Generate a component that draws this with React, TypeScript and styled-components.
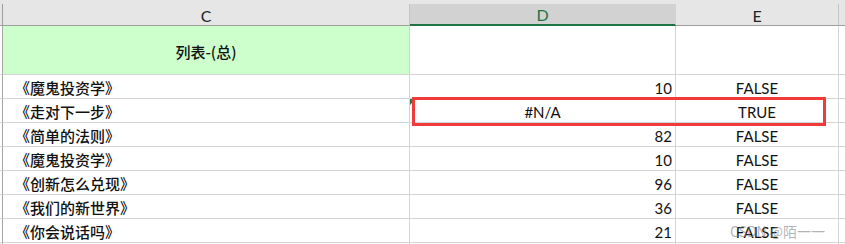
import styled, { createGlobalStyle } from "styled-components";

const GlobalStyle = createGlobalStyle`
  html, body {
    margin: 0;
    padding: 0;
    background: #ffffff;
    width: 845px;
    height: 244px;
    overflow: hidden;
  }
`;

type Align = "left" | "center" | "right";

const widths = { stub: 3, c: 407, d: 266, e: 163 };

const rows = [
  { title: "《魔鬼投资学》", value: "10", flag: "FALSE" },
  { title: "《走对下一步》", value: "#N/A", flag: "TRUE", error: true },
  { title: "《简单的法则》", value: "82", flag: "FALSE" },
  { title: "《魔鬼投资学》", value: "10", flag: "FALSE" },
  { title: "《创新怎么兑现》", value: "96", flag: "FALSE" },
  { title: "《我们的新世界》", value: "36", flag: "FALSE" },
  { title: "《你会说话吗》", value: "21", flag: "FALSE" },
];

export default function App() {
  return (
    <>
      <GlobalStyle />
      <Sheet>
        <HeaderRow>
          <HeadCell $w={widths.stub} />
          <HeadCell $w={widths.c}>C</HeadCell>
          <HeadCell $w={widths.d} $selected>
            D
          </HeadCell>
          <HeadCell $w={widths.e}>E</HeadCell>
          <HeadFill />
        </HeaderRow>

        <Row $h={49}>
          <Stub />
          <Cell $w={widths.c} $fill="#ccffcc" $align="center" $cjk>
            列表-(总)
          </Cell>
          <Cell $w={widths.d} />
          <Cell $w={widths.e} />
          <Fill />
        </Row>

        {rows.map((r, i) => (
          <Row $h={24} key={i}>
            <Stub />
            <Cell $w={widths.c} $align="left" $cjk>
              {r.title}
            </Cell>
            <Cell $w={widths.d} $align={r.error ? "center" : "right"}>
              {r.error && <ErrorMark />}
              {r.value}
            </Cell>
            <Cell $w={widths.e} $align="center">
              {r.flag}
            </Cell>
            <Fill />
          </Row>
        ))}

        <Row $h={24}>
          <Stub />
          <Cell $w={widths.c} />
          <Cell $w={widths.d} />
          <Cell $w={widths.e} />
          <Fill />
        </Row>

        <Highlight />
        <Watermark>CSDN @陌一一</Watermark>
      </Sheet>
    </>
  );
}

const Sheet = styled.div`
  position: relative;
  width: 845px;
  height: 244px;
  overflow: hidden;
  display: flex;
  flex-direction: column;
  font-family: Lato, "Liberation Sans", sans-serif;
  font-size: 15px;
  color: #111;
`;

const HeaderRow = styled.div`
  display: flex;
  padding-top: 4px;
  background: #e6e6e6;
`;

const HeadCell = styled.div<{ $w: number; $selected?: boolean }>`
  box-sizing: border-box;
  width: ${(p) => p.$w}px;
  height: 22px;
  flex-shrink: 0;
  display: flex;
  align-items: center;
  justify-content: center;
  padding-top: 1px;
  background: ${(p) => (p.$selected ? "#d2d2d2" : "#e6e6e6")};
  border-right: 1px solid ${(p) => (p.$selected ? "#d2d2d2" : "#c4c4c4")};
  border-bottom: ${(p) => (p.$selected ? "2px solid #217346" : "1px solid #9e9e9e")};
  color: ${(p) => (p.$selected ? "#217346" : "#222")};
  font-size: 16px;

  &:first-child {
    border-right-color: #9e9e9e;
  }
`;

const HeadFill = styled.div`
  flex: 1;
  height: 22px;
  box-sizing: border-box;
  border-bottom: 1px solid #9e9e9e;
`;

const Row = styled.div<{ $h: number }>`
  display: flex;
  height: ${(p) => p.$h}px;
  flex-shrink: 0;
`;

const Stub = styled.div`
  box-sizing: border-box;
  width: ${widths.stub}px;
  flex-shrink: 0;
  border-right: 1px solid #a6a6a6;
  border-bottom: 1px solid #d4d4d4;
`;

const Cell = styled.div<{ $w: number; $align?: Align; $fill?: string; $cjk?: boolean }>`
  position: relative;
  box-sizing: border-box;
  width: ${(p) => p.$w}px;
  flex-shrink: 0;
  display: flex;
  align-items: center;
  justify-content: ${(p) =>
    p.$align === "right" ? "flex-end" : p.$align === "center" ? "center" : "flex-start"};
  padding: 2px 3px 0 ${(p) => (p.$align === "left" ? 12 : 3)}px;
  background: ${(p) => p.$fill ?? "#ffffff"};
  border-right: 1px solid #d4d4d4;
  border-bottom: 1px solid #d4d4d4;
  font-family: ${(p) =>
    p.$cjk
      ? `"Noto Sans CJK SC", sans-serif`
      : `Lato, "Liberation Sans", sans-serif`};
  font-size: 15px;
  font-weight: ${(p) => (p.$cjk ? 500 : 400)};
  white-space: nowrap;
`;

const Fill = styled.div`
  flex: 1;
  border-bottom: 1px solid #d4d4d4;
`;

const ErrorMark = styled.span`
  position: absolute;
  top: 0;
  left: 0;
  width: 0;
  height: 0;
  border-top: 6px solid #1e7b3e;
  border-right: 6px solid transparent;
`;

const Highlight = styled.div`
  position: absolute;
  top: 97px;
  left: 412px;
  width: 414px;
  height: 29px;
  box-sizing: border-box;
  border: 3px solid #f23a3a;
  pointer-events: none;
`;

const Watermark = styled.div`
  position: absolute;
  left: 730px;
  top: 221px;
  font-family: "Noto Sans CJK SC", sans-serif;
  font-size: 14px;
  color: rgba(130, 130, 130, 0.6);
  white-space: nowrap;
  pointer-events: none;
`;
